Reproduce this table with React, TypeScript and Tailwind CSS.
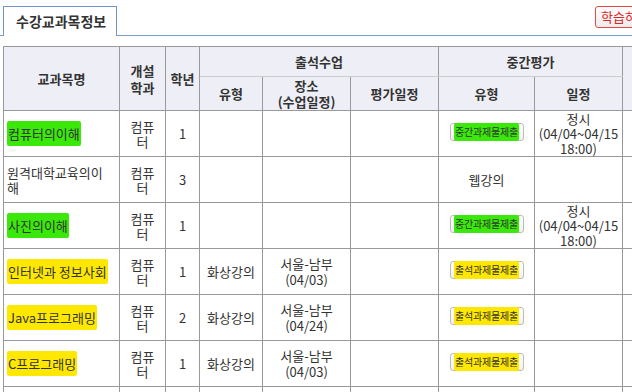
import React from "react";

type Mark = "green" | "yellow" | null;

type Row = {
  name: string;
  mark: Mark;
  dept: string;
  year: string;
  attType: string;
  place: string[];
  midType: "button" | "text" | "";
  midLabel: string;
  midDate: string[];
};

const rows: Row[] = [
  { name: "컴퓨터의이해", mark: "green", dept: "컴퓨터", year: "1", attType: "", place: [], midType: "button", midLabel: "중간과제물제출", midDate: ["정시", "(04/04~04/15", "18:00)"] },
  { name: "원격대학교육의이해", mark: null, dept: "컴퓨터", year: "3", attType: "", place: [], midType: "text", midLabel: "웹강의", midDate: [] },
  { name: "사진의이해", mark: "green", dept: "컴퓨터", year: "1", attType: "", place: [], midType: "button", midLabel: "중간과제물제출", midDate: ["정시", "(04/04~04/15", "18:00)"] },
  { name: "인터넷과 정보사회", mark: "yellow", dept: "컴퓨터", year: "1", attType: "화상강의", place: ["서울-남부", "(04/03)"], midType: "button", midLabel: "출석과제물제출", midDate: [] },
  { name: "Java프로그래밍", mark: "yellow", dept: "컴퓨터", year: "2", attType: "화상강의", place: ["서울-남부", "(04/24)"], midType: "button", midLabel: "출석과제물제출", midDate: [] },
  { name: "C프로그래밍", mark: "yellow", dept: "컴퓨터", year: "1", attType: "화상강의", place: ["서울-남부", "(04/03)"], midType: "button", midLabel: "출석과제물제출", midDate: [] },
];

function Highlight({ mark, children }: { mark: Mark; children: React.ReactNode }) {
  if (mark === "green") {
    return <span className="rounded-[2px] bg-[#3ae80a] px-px py-[3px]">{children}</span>;
  }
  if (mark === "yellow") {
    return <span className="rounded-[2px] bg-[#ffe800] px-px py-[3px]">{children}</span>;
  }
  return <>{children}</>;
}

const th = "border border-[#999] bg-[#eeeff6] text-center align-middle font-bold text-[13px] text-[#333]";
const td = "border border-[#999] align-middle text-[13px] leading-[15px] text-[#333]";

export default function App() {
  return (
    <div className="h-[392px] w-[632px] overflow-hidden bg-white font-['Noto_Sans_CJK_KR','Noto_Sans',sans-serif]">
      <div className="flex h-[36px] w-[720px] items-start border-b border-[#7c9cc9]">
        <div className="ml-[3px] mt-[6px] flex h-[30px] w-[114px] shrink-0 items-center border border-b-0 border-[#6f93c6] bg-white pl-[12px] text-[14px] font-bold text-[#333]">
          수강교과목정보
        </div>
        <button className="ml-[478px] mt-[6px] h-[22px] shrink-0 rounded-[3px] border border-[#e84545] bg-gradient-to-b from-white to-[#ececec] px-[5px] text-[13px] leading-[20px] text-[#e02424]">
          학습하기
        </button>
      </div>

      <table className="ml-[3px] mt-[10px] w-[700px] table-fixed border-collapse">
        <colgroup>
          <col className="w-[116px]" />
          <col className="w-[46px]" />
          <col className="w-[34px]" />
          <col className="w-[63px]" />
          <col className="w-[88px]" />
          <col className="w-[88px]" />
          <col className="w-[96px]" />
          <col className="w-[88px]" />
          <col className="w-[81px]" />
        </colgroup>
        <thead>
          <tr className="h-[30px]">
            <th rowSpan={2} className={th}>교과목명</th>
            <th rowSpan={2} className={`${th} leading-[17px]`}>개설<br />학과</th>
            <th rowSpan={2} className={th}>학년</th>
            <th colSpan={3} className={`${th} border-b-[#ccc]`}>출석수업</th>
            <th colSpan={2} className={`${th} border-b-[#ccc]`}>중간평가</th>
            <th rowSpan={2} className={th}></th>
          </tr>
          <tr className="h-[34px]">
            <th className={`${th} border-t-[#ccc]`}>유형</th>
            <th className={`${th} border-t-[#ccc] leading-[16px]`}>장소<br />(수업일정)</th>
            <th className={`${th} border-t-[#ccc]`}>평가일정</th>
            <th className={`${th} border-t-[#ccc]`}>유형</th>
            <th className={`${th} border-t-[#ccc]`}>일정</th>
          </tr>
        </thead>
        <tbody>
          {rows.map((r) => (
            <tr key={r.name} className="h-[46px]">
              <td className={`${td} pl-[3px] pr-[6px]`}>
                <Highlight mark={r.mark}>{r.name}</Highlight>
              </td>
              <td className={`${td} px-[6px] text-center`}>{r.dept}</td>
              <td className={`${td} text-center`}>{r.year}</td>
              <td className={`${td} text-center`}>{r.attType}</td>
              <td className={`${td} text-center leading-[16px]`}>
                {r.place.map((p) => (
                  <div key={p}>{p}</div>
                ))}
              </td>
              <td className={td}></td>
              <td className={`${td} text-center`}>
                {r.midType === "button" ? (
                  <button className="mb-[3px] inline-flex h-[18px] w-[74px] items-center justify-center whitespace-nowrap rounded-[3px] border border-[#bbb] bg-gradient-to-b from-white to-[#f1f1f1] text-[10px] leading-[12px] tracking-[-0.2px] text-[#333]">
                    <Highlight mark={r.mark}>{r.midLabel}</Highlight>
                  </button>
                ) : (
                  r.midLabel
                )}
              </td>
              <td className={`${td} text-center leading-[15px]`}>
                {r.midDate.map((d) => (
                  <div key={d}>{d}</div>
                ))}
              </td>
              <td className={td}></td>
            </tr>
          ))}
          <tr className="h-[46px]">
            <td className={td}></td>
            <td className={td}></td>
            <td className={td}></td>
            <td className={td}></td>
            <td className={td}></td>
            <td className={td}></td>
            <td className={td}></td>
            <td className={td}></td>
            <td className={td}></td>
          </tr>
        </tbody>
      </table>
    </div>
  );
}
